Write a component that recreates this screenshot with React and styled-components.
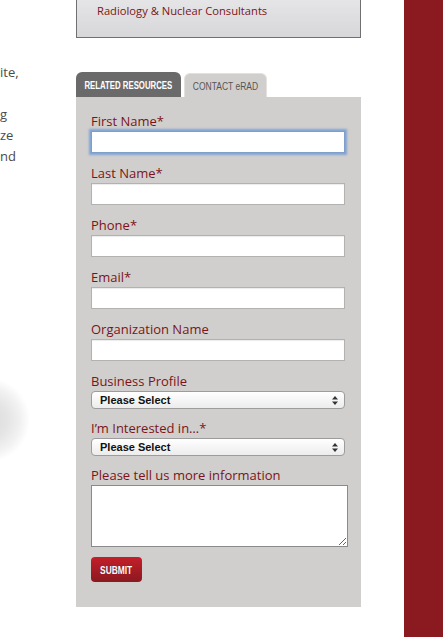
import React from "react";
import styled, { createGlobalStyle } from "styled-components";

const GlobalStyle = createGlobalStyle`
  html, body {
    margin: 0;
    padding: 0;
    background: #fff;
    overflow: hidden;
  }
  body {
    font-family: "Open Sans", "Liberation Sans", sans-serif;
  }
`;

const fields = [
  { label: "First Name*", focused: true },
  { label: "Last Name*" },
  { label: "Phone*" },
  { label: "Email*" },
  { label: "Organization Name" },
];

function App() {
  return (
    <>
      <GlobalStyle />
      <Page>
        <LeftColumn>
          <Fragments>
            <span>ite,</span>
            <span>&nbsp;</span>
            <span>g</span>
            <span>ze</span>
            <span>nd</span>
          </Fragments>
          <Glow />
        </LeftColumn>

        <Sidebar>
          <NewsBox>
            <span>Radiology &amp; Nuclear Consultants</span>
          </NewsBox>

          <Tabs>
            <Tab $active>
              <Condensed $scale={0.78}>RELATED RESOURCES</Condensed>
            </Tab>
            <Tab>
              <Condensed $scale={0.85}>CONTACT eRAD</Condensed>
            </Tab>
          </Tabs>

          <Panel>
            {fields.map((f) => (
              <Field key={f.label}>
                <Label>{f.label}</Label>
                <TextInput type="text" $focused={f.focused} />
              </Field>
            ))}

            <Field $tight>
              <Label>Business Profile</Label>
              <SelectBox>
                <span>Please Select</span>
                <Arrows />
              </SelectBox>
            </Field>

            <Field $tight>
              <Label>I’m Interested in…*</Label>
              <SelectBox>
                <span>Please Select</span>
                <Arrows />
              </SelectBox>
            </Field>

            <Field>
              <Label>Please tell us more information</Label>
              <TextArea />
            </Field>

            <SubmitButton type="button">
              <Condensed $scale={0.8}>SUBMIT</Condensed>
            </SubmitButton>
          </Panel>
        </Sidebar>

        <RedBar />
      </Page>
    </>
  );
}

function Arrows() {
  return (
    <ArrowIcon width="6" height="9" viewBox="0 0 6 9">
      <path d="M3 0 L6 3.5 L0 3.5 Z" fill="#333" />
      <path d="M3 9 L6 5.5 L0 5.5 Z" fill="#333" />
    </ArrowIcon>
  );
}

export default App;

const Page = styled.div`
  display: flex;
  height: 637px;
  width: 443px;
`;

const LeftColumn = styled.div`
  width: 76px;
  flex-shrink: 0;
  display: flex;
  flex-direction: column;
`;

const Fragments = styled.div`
  display: flex;
  flex-direction: column;
  margin-top: 62px;
  font-size: 13px;
  line-height: 21px;
  color: #4b4b4b;
`;

const Glow = styled.div`
  margin-top: 203px;
  height: 100px;
  width: 45px;
  background: radial-gradient(
    circle at -12px 50%,
    #dadada 0,
    #e5e5e5 20px,
    #f2f2f2 33px,
    #fff 42px
  );
`;

const Sidebar = styled.div`
  width: 285px;
  flex-shrink: 0;
  display: flex;
  flex-direction: column;
`;

const NewsBox = styled.div`
  height: 37px;
  border: 1px solid #707070;
  border-top: none;
  background: linear-gradient(#e5e5e7, #d7d7d9);
  padding-left: 20px;
  font-size: 11.2px;
  line-height: 22px;
  color: #7a1620;
`;

const Tabs = styled.div`
  display: flex;
  align-items: flex-end;
  gap: 3px;
  margin-top: 34px;
`;

const Tab = styled.div`
  width: ${(p) => (p.$active ? "105px" : "83px")};
  height: ${(p) => (p.$active ? "25px" : "24px")};
  box-sizing: border-box;
  padding-top: 1px;
  display: flex;
  align-items: center;
  justify-content: center;
  border-radius: 6px 6px 0 0;
  font-family: "Liberation Sans", Arial, sans-serif;
  font-size: 10px;
  font-weight: ${(p) => (p.$active ? 700 : 400)};
  color: ${(p) => (p.$active ? "#fff" : "#555")};
  background: ${(p) => (p.$active ? "#6a6a6a" : "#d1cfcd")};
  border: ${(p) => (p.$active ? "none" : "1px solid #e2e1df")};
  border-bottom: none;
  overflow: hidden;
`;

const Condensed = styled.span`
  display: inline-block;
  white-space: nowrap;
  transform: scaleX(${(p) => p.$scale});
  transform-origin: center;
`;

const Panel = styled.div`
  background: #d1cfcd;
  padding: 14px 16px 25px 15px;
  display: flex;
  flex-direction: column;
  align-items: flex-start;
`;

const Field = styled.div`
  display: flex;
  flex-direction: column;
  width: 100%;
  margin-bottom: ${(p) => (p.$tight ? "9px" : "10px")};
`;

const Label = styled.label`
  font-size: 13px;
  line-height: 20px;
  color: #7b1418;
`;

const TextInput = styled.input`
  box-sizing: border-box;
  width: 254px;
  height: 22px;
  margin: 0;
  background: #fff;
  border: 1px solid ${(p) => (p.$focused ? "#7e9ecb" : "#b3b2b0")};
  box-shadow: ${(p) =>
    p.$focused
      ? "0 0 2px 2px rgba(104, 150, 214, 0.75)"
      : "inset 0 1px 1px rgba(0, 0, 0, 0.08)"};
  outline: none;
`;

const SelectBox = styled.div`
  position: relative;
  box-sizing: border-box;
  width: 254px;
  height: 18px;
  padding-left: 8px;
  display: flex;
  align-items: center;
  border: 1px solid #9c9c9c;
  border-radius: 4px;
  background: linear-gradient(#ffffff, #ececec);
  font-family: "Liberation Sans", Arial, sans-serif;
  font-size: 11px;
  font-weight: 700;
  color: #111;
`;

const ArrowIcon = styled.svg`
  position: absolute;
  right: 6px;
  top: 4px;
`;

const TextArea = styled.textarea`
  box-sizing: border-box;
  width: 257px;
  height: 62px;
  margin: 0;
  border: 1px solid #8a8a8a;
  background: #fff;
  outline: none;
`;

const SubmitButton = styled.button`
  width: 51px;
  height: 25px;
  padding: 0;
  display: flex;
  align-items: center;
  justify-content: center;
  border: none;
  border-radius: 4px;
  background: linear-gradient(#c41f2a, #8b1820);
  color: #fff;
  font-family: "Liberation Sans", Arial, sans-serif;
  font-size: 10.5px;
  font-weight: 700;
  text-shadow: 0 0 1px rgba(0, 0, 0, 0.3);
  cursor: pointer;
`;

const RedBar = styled.div`
  margin-left: 43px;
  width: 39px;
  flex-shrink: 0;
  background: #8a1a1f;
`;
